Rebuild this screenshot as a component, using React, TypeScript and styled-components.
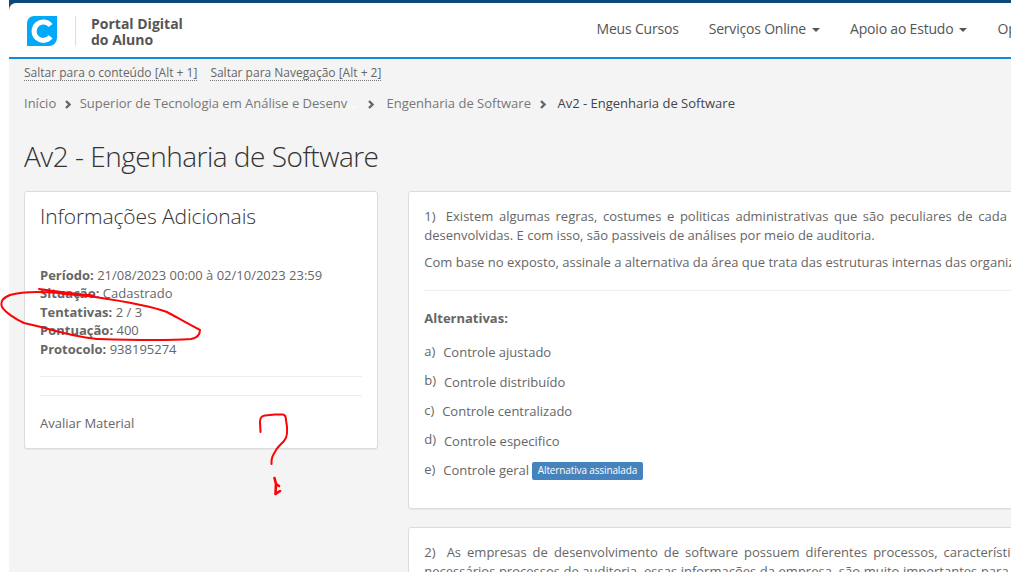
import React from "react";
import styled, { createGlobalStyle } from "styled-components";

const GlobalStyle = createGlobalStyle`
  * { box-sizing: border-box; }
  html, body { margin: 0; padding: 0; background: #fff; }
  body {
    height: 572px;
    overflow: hidden;
    font-family: "Open Sans", sans-serif;
    font-size: 13px;
    line-height: 18.57px;
    color: #666;
  }
`;

const Page = styled.div`
  position: relative;
  width: 1011px;
  height: 572px;
  padding-left: 9px;
  overflow: hidden;
  background: #fff;
`;

const Shell = styled.div`
  height: 572px;
  background: #f4f4f4;
  overflow: hidden;
`;

const TopBar = styled.div`
  background: #0c4a7c;
  padding-top: 3px;
`;

const Header = styled.header`
  display: flex;
  height: 56px;
  padding-left: 18px;
  background: #fff;
  border-bottom: 2px solid #0e8ae0;
  border-top-left-radius: 7px;
  overflow: hidden;
`;

const Logo = styled.svg`
  flex: none;
  width: 30px;
  height: 30px;
  margin-top: 13px;
`;

const BrandName = styled.div`
  flex: none;
  width: 474px;
  height: 30px;
  margin: 13px 0 0 18px;
  padding-left: 15px;
  border-left: 1px solid #ddd;
  font-size: 14px;
  font-weight: 700;
  line-height: 16px;
  color: #555;
`;

const Nav = styled.nav`
  display: flex;
  flex: none;
  align-items: flex-start;
  gap: 30px;
  margin-left: 47.5px;
  padding-top: 16px;
  font-size: 14px;
  line-height: 20px;
  letter-spacing: -0.19px;
  color: #555;
  white-space: nowrap;
`;

const NavItem = styled.a`
  display: flex;
  align-items: center;
`;

const Caret = styled.span`
  margin: 2px 0 0 6px;
  border-top: 4px solid #555;
  border-left: 4px solid transparent;
  border-right: 4px solid transparent;
`;

const SkipLinks = styled.div`
  display: flex;
  gap: 13px;
  padding: 6px 0 0 15px;
  font-size: 12px;
  line-height: 15px;
`;

const SkipLink = styled.a`
  height: 16px;
  border-bottom: 1px dotted #777;
  white-space: nowrap;
`;

const Breadcrumb = styled.div`
  display: flex;
  align-items: center;
  height: 19px;
  margin: 13px 0 0 15px;
  color: #777;
  white-space: nowrap;
`;

const Crumb = styled.span<{ $current?: boolean }>`
  color: ${(p) => (p.$current ? "#444" : "#777")};
`;

const Faded = styled.span`
  color: #fff;
`;

const Chevron = styled.svg<{ $before: number; $after: number }>`
  flex: none;
  width: 6px;
  height: 9px;
  margin: 2px ${(p) => p.$after}px 0 ${(p) => p.$before}px;
`;

const Title = styled.h1`
  margin: 23px 0 0 15px;
  font-size: 28px;
  line-height: 40px;
  font-weight: 300;
  letter-spacing: -0.5px;
  color: #333;
  white-space: nowrap;
`;

const Columns = styled.div`
  display: flex;
  align-items: flex-start;
  gap: 30px;
  margin: 15px 0 0 15px;
`;

const Card = styled.section`
  background: #fff;
  border: 1px solid #dcdcdc;
  border-radius: 3px;
  box-shadow: 0 1px 1px rgba(0, 0, 0, 0.05);
`;

const InfoCard = styled(Card)`
  flex: none;
  width: 354px;
  height: 258px;
  padding: 10px 15px;
`;

const InfoTitle = styled.h2`
  margin: 0 0 35.7px;
  font-size: 21px;
  line-height: 28px;
  font-weight: 300;
  letter-spacing: -0.1px;
  color: #333;
  white-space: nowrap;
`;

const InfoRow = styled.div`
  line-height: 18.5px;
  white-space: nowrap;
`;

const Rule = styled.hr<{ $top: number; $bottom: number }>`
  height: 1px;
  margin: ${(p) => p.$top}px 0 ${(p) => p.$bottom}px;
  border: 0;
  background: #eee;
`;

const Questions = styled.div`
  display: flex;
  flex-direction: column;
  flex: none;
  gap: 18px;
  width: 700px;
`;

const QuestionCard = styled(Card)<{ $height: number }>`
  height: ${(p) => p.$height}px;
  padding: 15px 15px 15px 15.3px;
`;

const TextLine = styled.div<{ $word?: number }>`
  white-space: pre;
  word-spacing: ${(p) => p.$word ?? 0}px;
`;

const Numeral = styled.span`
  margin-right: -1px;
`;

const Gap = styled.div`
  height: 9px;
`;

const AlternativesTitle = styled.div`
  margin-bottom: 14.75px;
  font-weight: 700;
`;

const Alternative = styled.div`
  display: flex;
  height: 29.4px;
  white-space: nowrap;
`;

const Letter = styled.span`
  margin-right: 7.8px;
`;

const Answer = styled.span<{ $drop: number }>`
  padding-top: ${(p) => p.$drop}px;
`;

const Badge = styled.span`
  height: 18px;
  margin: 2.3px 0 0 2.7px;
  padding: 0 6px;
  border-radius: 2px;
  background: #4682bc;
  color: #fff;
  font-size: 10px;
  line-height: 17px;
  letter-spacing: -0.13px;
`;

const Annotation = styled.svg`
  position: absolute;
  left: 0;
  top: 0;
  pointer-events: none;
`;

const info = [
  ["Período:", "21/08/2023 00:00 à 02/10/2023 23:59"],
  ["Situação:", "Cadastrado"],
  ["Tentativas:", "2 / 3"],
  ["Pontuação:", "400"],
  ["Protocolo:", "938195274"],
];

const alternatives = [
  { letter: "a)", text: "Controle ajustado", drop: 1 },
  { letter: "b)", text: "Controle distribuído", drop: 1.8 },
  { letter: "c)", text: "Controle centralizado", drop: 1 },
  { letter: "d)", text: "Controle especifico", drop: 2 },
  { letter: "e)", text: "Controle geral", drop: 1, marked: true },
];

const Separator = ({ before, after }: { before: number; after: number }) => (
  <Chevron $before={before} $after={after} viewBox="0 0 6 9">
    <path d="M1 1l3.5 3.5L1 8" fill="none" stroke="#666" strokeWidth="2.4" />
  </Chevron>
);

export default function App() {
  return (
    <Page>
      <GlobalStyle />
      <Shell>
        <TopBar>
          <Header>
            <Logo viewBox="0 0 30 30">
              <path d="M7 0H30V22a8 8 0 0 1-8 8H0V7a7 7 0 0 1 7-7z" fill="#00aaf8" />
              <path
                d="M23.6 9.6A9.2 9.2 0 1 0 23.6 20.8"
                fill="none"
                stroke="#fff"
                strokeWidth="5"
              />
            </Logo>
            <BrandName>
              Portal Digital
              <br />
              do Aluno
            </BrandName>
            <Nav>
              <NavItem>Meus Cursos</NavItem>
              <NavItem>Serviços Online<Caret /></NavItem>
              <NavItem>Apoio ao Estudo<Caret /></NavItem>
              <NavItem>Opções</NavItem>
            </Nav>
          </Header>
        </TopBar>
        <SkipLinks>
          <SkipLink>Saltar para o conteúdo [Alt + 1]</SkipLink>
          <SkipLink>Saltar para Navegação [Alt + 2]</SkipLink>
        </SkipLinks>
        <Breadcrumb>
          <Crumb>Início</Crumb>
          <Separator before={9} after={8.5} />
          <Crumb>
            Superior de Tecnologia em Análise e Desenv<Faded>...</Faded>
          </Crumb>
          <Separator before={10.5} after={12.5} />
          <Crumb>Engenharia de Software</Crumb>
          <Separator before={9} after={11.5} />
          <Crumb $current>Av2 - Engenharia de Software</Crumb>
        </Breadcrumb>
        <Title>Av2 - Engenharia de Software</Title>
        <Columns>
          <InfoCard>
            <InfoTitle>Informações Adicionais</InfoTitle>
            {info.map(([label, value]) => (
              <InfoRow key={label}>
                <b>{label}</b> {value}
              </InfoRow>
            ))}
            <Rule $top={17.65} $bottom={18} />
            <Rule $top={0} $bottom={18} />
            <InfoRow>Avaliar Material</InfoRow>
          </InfoCard>
          <Questions>
            <QuestionCard $height={318}>
              <TextLine $word={2.25}>
                <Numeral>1)</Numeral>
                {"  Existem algumas regras, costumes e politicas administrativas que são peculiares de cada"}
              </TextLine>
              <TextLine>desenvolvidas. E com isso, são passiveis de análises por meio de auditoria.</TextLine>
              <Gap />
              <TextLine>
                Com base no exposto, assinale a alternativa da área que trata das estruturas internas das organizações.
              </TextLine>
              <Rule $top={18} $bottom={18} />
              <AlternativesTitle>Alternativas:</AlternativesTitle>
              {alternatives.map((a) => (
                <Alternative key={a.letter}>
                  <Letter>{a.letter}</Letter>
                  <Answer $drop={a.drop}>{a.text}</Answer>
                  {a.marked && <Badge>Alternativa assinalada</Badge>}
                </Alternative>
              ))}
            </QuestionCard>
            <QuestionCard $height={200}>
              <TextLine $word={2.65}>
                <Numeral>2)</Numeral>
                {"  As empresas de desenvolvimento de software possuem diferentes processos, características"}
              </TextLine>
              <TextLine $word={0.2}>
                necessários processos de auditoria, essas informações da empresa, são muito importantes para a
              </TextLine>
            </QuestionCard>
          </Questions>
        </Columns>
      </Shell>
      <Annotation width="1011" height="572" viewBox="0 0 1011 572">
        <g fill="none" stroke="#fb0307" strokeWidth="2" strokeLinecap="round" strokeLinejoin="round">
          <path d="M39 289C54 291 77 294 95 297C122 301 151 306 167 312C178 318 190 325 200 330C200 335 196 338 191 339C162 341 130 340 97 339C77 337 55 331 41 327L24 323C15 319 5 312 2 307C0 301 3 298 10 295C24 291 47 292 59 293C73 294 82 295 94 296" />
          <path d="M61 293L93 296" strokeWidth="3" />
          <path d="M260.500 432L260 422C260 417 262 416 265 415.500L275 414.500H283C285 415 286 417 286 420C288 430 288 437 284 441C280 445 278 447 276 450C273 455 271 458 271.500 464" />
          <path d="M274.500 478L276 484L275.500 494L280 491M276 484L279 486" strokeWidth="2.600" />
        </g>
      </Annotation>
    </Page>
  );
}
